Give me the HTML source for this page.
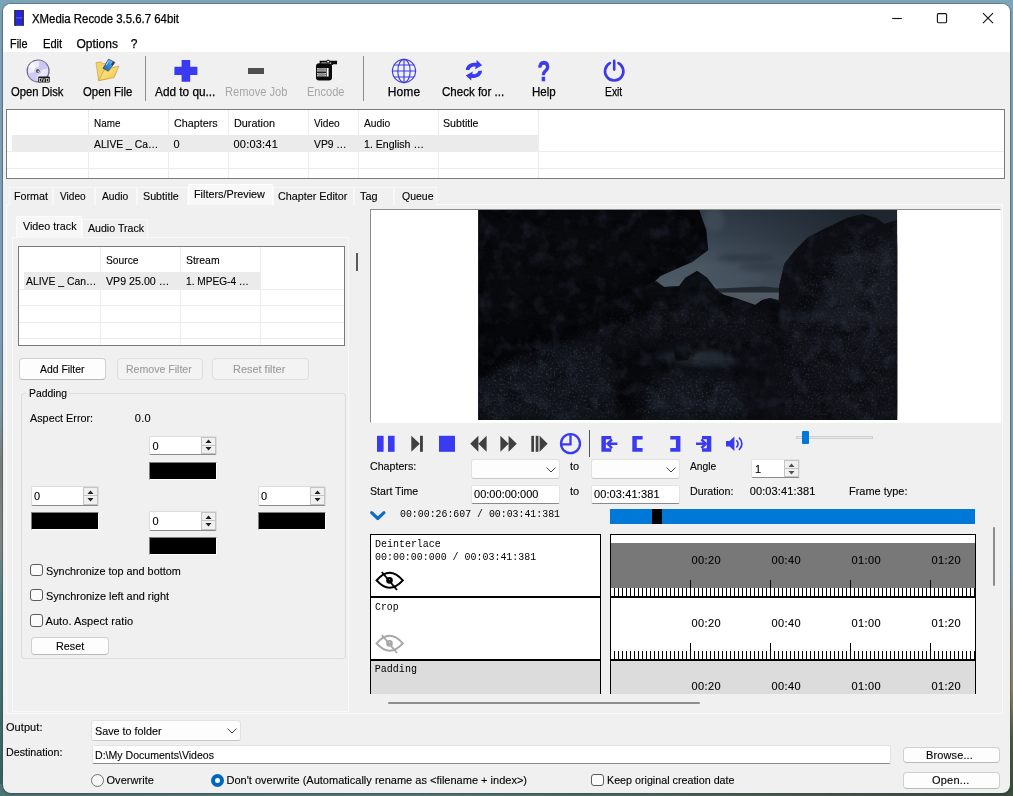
<!DOCTYPE html>
<html lang="en"><head><meta charset="utf-8"><title>XMedia Recode 3.5.6.7 64bit</title>
<style>
html,body{margin:0;padding:0;}
body{width:1013px;height:796px;overflow:hidden;position:relative;background:#6f8f9c;font-family:"Liberation Sans",sans-serif;}
#wall{position:absolute;left:0;top:0;width:1013px;height:796px;
 background:
  linear-gradient(to right,#4f7474,#587f7c 40%,#4a5e52 80%,#3d4d3c) 0 784px/1013px 12px no-repeat,
  linear-gradient(to bottom,#7ba3b7 0,#7ba1b5 340px,#8098a8 410px,#7c7e7a 465px,#848787 545px,#4c7f83 605px,#3d7171 700px,#356060 796px) 0 0/14px 796px no-repeat,
  linear-gradient(to bottom,#7da5b9 0,#7ba2b6 560px,#8a8f84 620px,#8c8268 690px,#4a5a42 740px,#3a4a36 796px) 999px 0/14px 796px no-repeat,
  #7da5b9;
}
#win{position:absolute;left:3px;top:4px;width:1007px;height:789px;border-radius:8px;overflow:hidden;background:#f0f0f0;box-shadow:0 0 0 1px rgba(70,85,90,.45),0 1px 3px rgba(0,0,0,.35);}
#stage{position:absolute;left:-3px;top:-4px;width:1013px;height:796px;will-change:transform;}
.b{position:absolute;box-sizing:border-box;}
.t{position:absolute;white-space:nowrap;color:#000;}
.ui{font-size:11px;-webkit-text-stroke:0.12px currentColor;}
.sg{font-size:12px;-webkit-text-stroke:0.25px currentColor;}
.mono{font-family:"Liberation Mono",monospace;font-size:10px;}
svg{position:absolute;overflow:visible;}

</style></head>
<body>
<div id="wall"></div>
<div id="win"><div id="stage">
<div class="b" style="left:0px;top:0px;width:1013px;height:52px;background:#ffffff;"></div>
<svg style="left:14px;top:10px" width="11" height="17" viewBox="0 0 11 17"><rect x="0.3" y="0" width="9.5" height="15.8" fill="#2a2a6a"/><rect x="1.8" y="0.8" width="6.5" height="14.4" fill="#2626e2"/><rect x="1.8" y="7" width="6.5" height="1.6" fill="#4a4af0"/><rect x="0.3" y="0" width="1.5" height="15.8" fill="#34343e"/><rect x="8.3" y="0" width="1.5" height="15.8" fill="#34343e"/></svg>
<div id="t1" class="t sg" style="left:32px;top:10.5px;line-height:16px;height:16px;transform:scaleX(0.9497);transform-origin:0 50%;">XMedia Recode 3.5.6.7 64bit</div>
<svg style="left:885px;top:8px" width="120" height="22" viewBox="0 0 120 22"><g stroke="#111" stroke-width="1.1" fill="none"><path d="M7.2 10.5H16.8"/><rect x="52.4" y="5.6" width="9.2" height="9.2" rx="1.2"/><path d="M98 5.2L108 15.2M108 5.2L98 15.2"/></g></svg>
<div id="t2" class="t sg" style="left:10.4px;top:36.0px;line-height:16px;height:16px;transform:scaleX(0.9047);transform-origin:0 50%;">File</div>
<div id="t3" class="t sg" style="left:42.5px;top:36.0px;line-height:16px;height:16px;transform:scaleX(0.9281);transform-origin:0 50%;">Edit</div>
<div id="t4" class="t sg" style="left:76.5px;top:36.0px;line-height:16px;height:16px;letter-spacing:0.02px;">Options</div>
<div id="t5" class="t sg" style="left:130.8px;top:36.0px;line-height:16px;height:16px;">?</div>
<div class="b" style="left:0px;top:52px;width:1013px;height:54px;background:#f0f0f0;"></div>
<div class="b" style="left:145px;top:56px;width:1px;height:45px;background:#8c8c8c;"></div>
<div class="b" style="left:363px;top:56px;width:1px;height:45px;background:#8c8c8c;"></div>
<div id="t6" class="t sg" style="left:10.7px;top:84.0px;line-height:16px;height:16px;transform:scaleX(0.937);transform-origin:0 50%;">Open Disk</div>
<div id="t7" class="t sg" style="left:83px;top:84.0px;line-height:16px;height:16px;transform:scaleX(0.9475);transform-origin:0 50%;">Open File</div>
<div id="t8" class="t sg" style="left:154.8px;top:84.0px;line-height:16px;height:16px;transform:scaleX(0.9839);transform-origin:0 50%;">Add to qu...</div>
<div id="t9" class="t sg" style="left:225px;top:84.0px;line-height:16px;height:16px;color:#a6a6a6;transform:scaleX(0.9262);transform-origin:0 50%;-webkit-text-stroke:0;">Remove Job</div>
<div id="t10" class="t sg" style="left:306.5px;top:84.0px;line-height:16px;height:16px;color:#a6a6a6;transform:scaleX(0.9213);transform-origin:0 50%;-webkit-text-stroke:0;">Encode</div>
<div id="t11" class="t sg" style="left:387.7px;top:84.0px;line-height:16px;height:16px;letter-spacing:0.146px;">Home</div>
<div id="t12" class="t sg" style="left:442.4px;top:84.0px;line-height:16px;height:16px;transform:scaleX(0.9615);transform-origin:0 50%;">Check for ...</div>
<div id="t13" class="t sg" style="left:531.8px;top:84.0px;line-height:16px;height:16px;transform:scaleX(0.96);transform-origin:0 50%;">Help</div>
<div id="t14" class="t sg" style="left:604.7px;top:84.0px;line-height:16px;height:16px;transform:scaleX(0.8593);transform-origin:0 50%;">Exit</div>
<svg style="left:26px;top:59px" width="26" height="25" viewBox="0 0 26 25">
<defs><radialGradient id="dg" cx="45%" cy="40%" r="70%"><stop offset="0" stop-color="#f6f5ff"/><stop offset="0.7" stop-color="#e6e3fa"/><stop offset="1" stop-color="#d2cef2"/></radialGradient>
<clipPath id="dcp"><circle cx="12.1" cy="11.9" r="10.6"/></clipPath></defs>
<circle cx="12.1" cy="11.9" r="10.9" fill="url(#dg)" stroke="#6c6a88" stroke-width="1.2"/>
<g clip-path="url(#dcp)"><path d="M12.1 11.9L14 -2L26 8Z" fill="#c6c1f4" opacity=".85"/><path d="M12.1 11.9L10 26L-2 16Z" fill="#c6c1f4" opacity=".75"/>
<path d="M12.1 11.9L-2 6L4 -2Z" fill="#ffffff" opacity=".7"/></g>
<circle cx="11.9" cy="11.9" r="3.3" fill="#e4e1f4" stroke="#b4b0d4" stroke-width="0.6"/>
<circle cx="11.8" cy="11.9" r="2" fill="#5a5868"/><circle cx="12.3" cy="12.5" r="0.7" fill="#d8d6e6"/>
<rect x="12.2" y="17.6" width="11.6" height="6" rx="0.8" fill="#181a18"/>
<text x="18" y="22.6" font-family="Liberation Sans, sans-serif" font-size="5" font-weight="bold" fill="#d8d8d8" text-anchor="middle">DVD</text>
</svg>
<svg style="left:95px;top:58px" width="26" height="25" viewBox="0 0 26 25">
<defs><linearGradient id="fg" x1="0" y1="0" x2="1" y2="1"><stop offset="0" stop-color="#fdeeb0"/><stop offset="0.6" stop-color="#f6d660"/><stop offset="1" stop-color="#e6b93c"/></linearGradient>
<linearGradient id="pg" x1="1" y1="0" x2="0" y2="1"><stop offset="0" stop-color="#a8dcfc"/><stop offset="0.45" stop-color="#3a92e4"/><stop offset="1" stop-color="#1c5cb0"/></linearGradient></defs>
<path d="M1 4.6L6 3.9L8 5.6L12.5 5L13 20.5L3.6 22.6Z" fill="#f3d46a" stroke="#c9a444" stroke-width=".7"/>
<path d="M13.6 1.2L19.8 4.4L13.6 13L8 10.4Z" fill="url(#pg)" stroke="#2c4660" stroke-width=".8"/>
<path d="M18 3.5L19.8 4.4L17.6 7.6L15.9 6.6Z" fill="#333a40"/>
<path d="M13.2 3.4L11 7.2" stroke="#d8efff" stroke-width="1" opacity=".8"/>
<path d="M3.6 22.6L9.2 11.8L13.4 13.6L16.4 10L23.8 8.2L19 19.6Z" fill="url(#fg)" stroke="#c49a38" stroke-width=".7"/>
</svg>
<svg style="left:174px;top:59.5px" width="24" height="22" viewBox="0 0 24 22"><path d="M7.6 0H16.2V6.8H23.4V15H16.2V21.8H7.6V15H0.4V6.8H7.6Z" fill="#3a3af2"/></svg>
<div class="b" style="left:247.8px;top:67.6px;width:16.3px;height:6.1px;background:#4f4f4f;"></div>
<svg style="left:315px;top:59px" width="23" height="23" viewBox="0 0 23 23">
<rect x="1" y="4.2" width="16" height="17.2" rx="3" fill="#0a0a0a"/>
<path d="M5.5 4.5V2.6H21.2V4.4H17V6" fill="none" stroke="#0a0a0a" stroke-width="1.7"/>
<circle cx="13.1" cy="2.7" r="1.5" fill="#e8e8e8" stroke="#0a0a0a" stroke-width="1"/>
<rect x="2.2" y="9" width="8.6" height="3.8" fill="#8f8f8f"/><rect x="2.2" y="13.8" width="8.6" height="3.8" fill="#8f8f8f"/>
<rect x="11.6" y="9" width="2" height="8.6" fill="#ffffff"/>
<g fill="#e0e0e0"><rect x="2.2" y="9.2" width="1" height="1"/><rect x="2.2" y="11.4" width="1" height="1"/><rect x="2.2" y="14" width="1" height="1"/><rect x="2.2" y="16.2" width="1" height="1"/><rect x="9.8" y="9.2" width="1" height="1"/><rect x="9.8" y="11.4" width="1" height="1"/><rect x="9.8" y="14" width="1" height="1"/><rect x="9.8" y="16.2" width="1" height="1"/></g>
</svg>
<svg style="left:391px;top:58px" width="26" height="26" viewBox="0 0 26 26"><g fill="none" stroke="#3d3de6" stroke-width="1.15">
<circle cx="13" cy="13" r="11.6"/><ellipse cx="13" cy="13" rx="6.2" ry="11.6"/><path d="M13 1.4V24.6M1.4 13H24.6M3.2 7H22.8M3.2 19H22.8"/></g></svg>
<svg style="left:464px;top:59px" width="20" height="23" viewBox="0 0 20 23"><g fill="#3a3af2">
<path id="ra" d="M1.8 10.9C2.2 6 7 2.9 12.4 4L12.7 1.1L18.1 6.2L11.1 10.3L11.6 7.6C8.6 7 6.2 8.2 5.4 10.9Z"/>
<path d="M1.8 10.9C2.2 6 7 2.9 12.4 4L12.7 1.1L18.1 6.2L11.1 10.3L11.6 7.6C8.6 7 6.2 8.2 5.4 10.9Z" transform="rotate(180 9.95 11.35)"/></g></svg>
<div id="t15" class="t sg" style="left:534.8px;top:55.599999999999994px;line-height:30px;height:30px;color:#3a3ae8;font-size:29px;font-weight:bold;transform:scaleX(0.72);transform-origin:50% 50%;-webkit-text-stroke:0.7px #3a3ae8;">?</div>
<svg style="left:602px;top:59px" width="25" height="24" viewBox="0 0 25 24"><g fill="none" stroke="#3a3ae8" stroke-width="2.6" stroke-linecap="round">
<path d="M7.9 4.2A9.2 9.2 0 1 0 16.5 4.2"/><path d="M12.2 1.8V10.6"/></g></svg>
<div class="b" style="left:6px;top:109px;width:999px;height:70px;background:#ffffff;border:1px solid #7a7a7a;"></div>
<div class="b" style="left:12px;top:135px;width:526px;height:16.5px;background:#ebebeb;"></div>
<div class="b" style="left:88px;top:110px;width:1px;height:68px;background:#ececec;"></div>
<div class="b" style="left:168px;top:110px;width:1px;height:68px;background:#ececec;"></div>
<div class="b" style="left:228px;top:110px;width:1px;height:68px;background:#ececec;"></div>
<div class="b" style="left:308px;top:110px;width:1px;height:68px;background:#ececec;"></div>
<div class="b" style="left:358px;top:110px;width:1px;height:68px;background:#ececec;"></div>
<div class="b" style="left:438px;top:110px;width:1px;height:68px;background:#ececec;"></div>
<div class="b" style="left:538px;top:110px;width:1px;height:68px;background:#ececec;"></div>
<div class="b" style="left:7px;top:151px;width:997px;height:1px;background:#ececec;"></div>
<div class="b" style="left:7px;top:168px;width:997px;height:1px;background:#ececec;"></div>
<div id="t16" class="t ui" style="left:93.8px;top:115.0px;line-height:16px;height:16px;transform:scaleX(0.8997);transform-origin:0 50%;">Name</div>
<div id="t17" class="t ui" style="left:173.5px;top:115.0px;line-height:16px;height:16px;transform:scaleX(0.9789);transform-origin:0 50%;">Chapters</div>
<div id="t18" class="t ui" style="left:233.5px;top:115.0px;line-height:16px;height:16px;transform:scaleX(0.9861);transform-origin:0 50%;">Duration</div>
<div id="t19" class="t ui" style="left:313.6px;top:115.0px;line-height:16px;height:16px;transform:scaleX(0.9199);transform-origin:0 50%;">Video</div>
<div id="t20" class="t ui" style="left:363.8px;top:115.0px;line-height:16px;height:16px;transform:scaleX(0.9346);transform-origin:0 50%;">Audio</div>
<div id="t21" class="t ui" style="left:443.4px;top:115.0px;line-height:16px;height:16px;transform:scaleX(0.9672);transform-origin:0 50%;">Subtitle</div>
<div id="t22" class="t ui" style="left:93.8px;top:136.0px;line-height:16px;height:16px;transform:scaleX(0.9374);transform-origin:0 50%;">ALIVE _ Ca…</div>
<div id="t23" class="t ui" style="left:173.5px;top:136.0px;line-height:16px;height:16px;">0</div>
<div id="t24" class="t ui" style="left:233.5px;top:136.0px;line-height:16px;height:16px;letter-spacing:0.209px;">00:03:41</div>
<div id="t25" class="t ui" style="left:313.6px;top:136.0px;line-height:16px;height:16px;transform:scaleX(0.9381);transform-origin:0 50%;">VP9 …</div>
<div id="t26" class="t ui" style="left:363.8px;top:136.0px;line-height:16px;height:16px;transform:scaleX(0.9619);transform-origin:0 50%;">1. English …</div>
<div class="b" style="left:6px;top:204px;width:997px;height:510px;background:#f0f0f0;border:1px solid #fafafa;"></div>
<div class="b" style="left:9px;top:187px;width:44px;height:18px;background:#f0f0f0;border:1px solid #f8f8f8;border-bottom:none;"></div>
<div id="t27" class="t ui" style="left:13.6px;top:188.0px;line-height:16px;height:16px;transform:scaleX(0.9758);transform-origin:0 50%;">Format</div>
<div class="b" style="left:53px;top:187px;width:41.5px;height:18px;background:#f0f0f0;border:1px solid #f8f8f8;border-bottom:none;"></div>
<div id="t28" class="t ui" style="left:59.5px;top:188.0px;line-height:16px;height:16px;transform:scaleX(0.9163);transform-origin:0 50%;">Video</div>
<div class="b" style="left:94.5px;top:187px;width:42.0px;height:18px;background:#f0f0f0;border:1px solid #f8f8f8;border-bottom:none;"></div>
<div id="t29" class="t ui" style="left:101.5px;top:188.0px;line-height:16px;height:16px;transform:scaleX(0.9346);transform-origin:0 50%;">Audio</div>
<div class="b" style="left:136.5px;top:187px;width:51.099999999999994px;height:18px;background:#f0f0f0;border:1px solid #f8f8f8;border-bottom:none;"></div>
<div id="t30" class="t ui" style="left:143.2px;top:188.0px;line-height:16px;height:16px;transform:scaleX(0.9754);transform-origin:0 50%;">Subtitle</div>
<div class="b" style="left:273px;top:187px;width:81px;height:18px;background:#f0f0f0;border:1px solid #f8f8f8;border-bottom:none;"></div>
<div id="t31" class="t ui" style="left:277.5px;top:188.0px;line-height:16px;height:16px;transform:scaleX(0.9783);transform-origin:0 50%;">Chapter Editor</div>
<div class="b" style="left:354px;top:187px;width:40px;height:18px;background:#f0f0f0;border:1px solid #f8f8f8;border-bottom:none;"></div>
<div id="t32" class="t ui" style="left:359.5px;top:188.0px;line-height:16px;height:16px;transform:scaleX(0.9859);transform-origin:0 50%;">Tag</div>
<div class="b" style="left:394px;top:187px;width:42.60000000000002px;height:18px;background:#f0f0f0;border:1px solid #f8f8f8;border-bottom:none;"></div>
<div id="t33" class="t ui" style="left:401.5px;top:188.0px;line-height:16px;height:16px;transform:scaleX(0.9536);transform-origin:0 50%;">Queue</div>
<div class="b" style="left:187.6px;top:184px;width:85.4px;height:21px;background:#f8f8f8;border:1px solid #ffffff;border-bottom:none;border-radius:2px 2px 0 0;"></div>
<div id="t34" class="t ui" style="left:194.3px;top:186.0px;line-height:16px;height:16px;transform:scaleX(0.983);transform-origin:0 50%;">Filters/Preview</div>
<div class="b" style="left:12px;top:237px;width:337px;height:475px;background:#f0f0f0;border:1px solid #f9f9f9;"></div>
<div class="b" style="left:16px;top:216px;width:66px;height:22px;background:#f7f7f7;border:1px solid #fcfcfc;border-bottom:none;border-radius:2px 2px 0 0;"></div>
<div id="t35" class="t ui" style="left:22.7px;top:218.0px;line-height:16px;height:16px;transform:scaleX(0.9758);transform-origin:0 50%;">Video track</div>
<div class="b" style="left:82px;top:219px;width:66px;height:18px;background:#f0f0f0;border:1px solid #f8f8f8;border-bottom:none;"></div>
<div id="t36" class="t ui" style="left:88px;top:219.6px;line-height:16px;height:16px;transform:scaleX(0.964);transform-origin:0 50%;">Audio Track</div>
<div class="b" style="left:18px;top:246px;width:327px;height:100px;background:#ffffff;border:1px solid #7a7a7a;"></div>
<div class="b" style="left:24px;top:272px;width:236px;height:16.5px;background:#ebebeb;"></div>
<div class="b" style="left:100px;top:247px;width:1px;height:98px;background:#ececec;"></div>
<div class="b" style="left:180px;top:247px;width:1px;height:98px;background:#ececec;"></div>
<div class="b" style="left:260px;top:247px;width:1px;height:98px;background:#ececec;"></div>
<div class="b" style="left:19px;top:288.5px;width:325px;height:1px;background:#ececec;"></div>
<div class="b" style="left:19px;top:305px;width:325px;height:1px;background:#ececec;"></div>
<div class="b" style="left:19px;top:322px;width:325px;height:1px;background:#ececec;"></div>
<div class="b" style="left:19px;top:338px;width:325px;height:1px;background:#ececec;"></div>
<div id="t37" class="t ui" style="left:105.6px;top:251.7px;line-height:16px;height:16px;transform:scaleX(0.9352);transform-origin:0 50%;">Source</div>
<div id="t38" class="t ui" style="left:185.5px;top:251.7px;line-height:16px;height:16px;transform:scaleX(0.9473);transform-origin:0 50%;">Stream</div>
<div id="t39" class="t ui" style="left:26px;top:273.0px;line-height:16px;height:16px;transform:scaleX(0.9424);transform-origin:0 50%;">ALIVE _ Can…</div>
<div id="t40" class="t ui" style="left:105.6px;top:273.0px;line-height:16px;height:16px;transform:scaleX(0.9689);transform-origin:0 50%;">VP9 25.00 …</div>
<div id="t41" class="t ui" style="left:186.3px;top:273.0px;line-height:16px;height:16px;transform:scaleX(0.9201);transform-origin:0 50%;">1. MPEG-4 …</div>
<div class="b" style="left:356px;top:253px;width:2px;height:18px;background:#5a5a5a;"></div>
<div class="b" style="left:19.3px;top:357.5px;width:87.2px;height:22px;background:#fdfdfd;border:1px solid #d0d0d0;border-radius:4px;border-bottom-color:#b9b9b9;"></div>
<div id="t42" class="t ui" style="left:40.2px;top:360.5px;line-height:16px;height:16px;transform:scaleX(0.9452);transform-origin:0 50%;">Add Filter</div>
<div class="b" style="left:116.6px;top:357.5px;width:86px;height:22px;background:#f3f3f3;border:1px solid #dedede;border-radius:4px;"></div>
<div id="t43" class="t ui" style="left:126px;top:360.5px;line-height:16px;height:16px;color:#9c9c9c;transform:scaleX(0.9596);transform-origin:0 50%;">Remove Filter</div>
<div class="b" style="left:211.6px;top:357.5px;width:97px;height:22px;background:#f3f3f3;border:1px solid #dedede;border-radius:4px;"></div>
<div id="t44" class="t ui" style="left:232.6px;top:360.5px;line-height:16px;height:16px;color:#9c9c9c;transform:scaleX(0.9947);transform-origin:0 50%;">Reset filter</div>
<div class="b" style="left:21px;top:393px;width:325px;height:266px;border:1px solid #dcdcdc;border-radius:3px;"></div>
<div class="b" style="left:26px;top:386px;width:43px;height:14px;background:#f0f0f0;"></div>
<div id="t45" class="t ui" style="left:28.5px;top:385.0px;line-height:16px;height:16px;transform:scaleX(0.9412);transform-origin:0 50%;">Padding</div>
<div id="t46" class="t ui" style="left:30.2px;top:410.2px;line-height:16px;height:16px;transform:scaleX(0.9831);transform-origin:0 50%;">Aspect Error:</div>
<div id="t47" class="t ui" style="left:134.8px;top:410.2px;line-height:16px;height:16px;letter-spacing:0.234px;">0.0</div>
<div class="b" style="left:149px;top:435.7px;width:68px;height:19.5px;background:#ffffff;border:1px solid #dcdcdc;border-radius:2px;border-bottom-color:#8a8a8a;"></div>
<div class="b" style="left:201px;top:436.7px;width:15px;height:17.5px;background:#f0f0f0;border:1px solid #c4c4c4;"></div>
<div class="b" style="left:202px;top:444.95px;width:13px;height:1px;background:#c4c4c4;"></div>
<svg style="left:205px;top:439.2px" width="7" height="12" viewBox="0 0 7 12"><path d="M3.5 0.5L6.5 4H0.5Z M3.5 11.5L6.5 8H0.5Z" fill="#202020"/></svg>
<div id="t48" class="t ui" style="left:152.5px;top:437.65px;line-height:16px;height:16px;">0</div>
<div class="b" style="left:149px;top:461.5px;width:68px;height:18px;background:#000000;border:1px solid #7e7e7e;border-right-color:#fff;border-bottom-color:#fff;"></div>
<div class="b" style="left:30.5px;top:486px;width:68px;height:19.5px;background:#ffffff;border:1px solid #dcdcdc;border-radius:2px;border-bottom-color:#8a8a8a;"></div>
<div class="b" style="left:82.5px;top:487px;width:15px;height:17.5px;background:#f0f0f0;border:1px solid #c4c4c4;"></div>
<div class="b" style="left:83.5px;top:495.25px;width:13px;height:1px;background:#c4c4c4;"></div>
<svg style="left:86.5px;top:489.5px" width="7" height="12" viewBox="0 0 7 12"><path d="M3.5 0.5L6.5 4H0.5Z M3.5 11.5L6.5 8H0.5Z" fill="#202020"/></svg>
<div id="t49" class="t ui" style="left:34.0px;top:487.95px;line-height:16px;height:16px;">0</div>
<div class="b" style="left:30.5px;top:512px;width:68px;height:18px;background:#000000;border:1px solid #7e7e7e;border-right-color:#fff;border-bottom-color:#fff;"></div>
<div class="b" style="left:257.5px;top:486px;width:68px;height:19.5px;background:#ffffff;border:1px solid #dcdcdc;border-radius:2px;border-bottom-color:#8a8a8a;"></div>
<div class="b" style="left:309.5px;top:487px;width:15px;height:17.5px;background:#f0f0f0;border:1px solid #c4c4c4;"></div>
<div class="b" style="left:310.5px;top:495.25px;width:13px;height:1px;background:#c4c4c4;"></div>
<svg style="left:313.5px;top:489.5px" width="7" height="12" viewBox="0 0 7 12"><path d="M3.5 0.5L6.5 4H0.5Z M3.5 11.5L6.5 8H0.5Z" fill="#202020"/></svg>
<div id="t50" class="t ui" style="left:261.0px;top:487.95px;line-height:16px;height:16px;">0</div>
<div class="b" style="left:257.5px;top:512px;width:68px;height:18px;background:#000000;border:1px solid #7e7e7e;border-right-color:#fff;border-bottom-color:#fff;"></div>
<div class="b" style="left:149px;top:511px;width:68px;height:19.5px;background:#ffffff;border:1px solid #dcdcdc;border-radius:2px;border-bottom-color:#8a8a8a;"></div>
<div class="b" style="left:201px;top:512px;width:15px;height:17.5px;background:#f0f0f0;border:1px solid #c4c4c4;"></div>
<div class="b" style="left:202px;top:520.25px;width:13px;height:1px;background:#c4c4c4;"></div>
<svg style="left:205px;top:514.5px" width="7" height="12" viewBox="0 0 7 12"><path d="M3.5 0.5L6.5 4H0.5Z M3.5 11.5L6.5 8H0.5Z" fill="#202020"/></svg>
<div id="t51" class="t ui" style="left:152.5px;top:512.95px;line-height:16px;height:16px;">0</div>
<div class="b" style="left:149px;top:537px;width:68px;height:18px;background:#000000;border:1px solid #7e7e7e;border-right-color:#fff;border-bottom-color:#fff;"></div>
<div class="b" style="left:30.2px;top:563.8px;width:12.6px;height:12.6px;background:#fbfbfb;border:1px solid #5c5c5c;border-radius:3px;"></div>
<div id="t52" class="t ui" style="left:45.5px;top:563.0px;line-height:16px;height:16px;transform:scaleX(0.9833);transform-origin:0 50%;">Synchronize top and bottom</div>
<div class="b" style="left:30.2px;top:588.8px;width:12.6px;height:12.6px;background:#fbfbfb;border:1px solid #5c5c5c;border-radius:3px;"></div>
<div id="t53" class="t ui" style="left:45.5px;top:588.0px;line-height:16px;height:16px;transform:scaleX(0.9908);transform-origin:0 50%;">Synchronize left and right</div>
<div class="b" style="left:30.2px;top:614.1999999999999px;width:12.6px;height:12.6px;background:#fbfbfb;border:1px solid #5c5c5c;border-radius:3px;"></div>
<div id="t54" class="t ui" style="left:45.5px;top:613.4px;line-height:16px;height:16px;letter-spacing:0.077px;">Auto. Aspect ratio</div>
<div class="b" style="left:31px;top:637px;width:78px;height:17.5px;background:#fdfdfd;border:1px solid #d0d0d0;border-radius:4px;border-bottom-color:#b9b9b9;"></div>
<div id="t55" class="t ui" style="left:55.5px;top:637.75px;line-height:16px;height:16px;transform:scaleX(0.9809);transform-origin:0 50%;">Reset</div>
<div class="b" style="left:370px;top:209px;width:631px;height:214px;background:#ffffff;border:1px solid #8c8c8c;border-right-color:#fdfdfd;border-bottom-color:#fdfdfd;"></div>
<svg style="left:478.3px;top:210.4px" width="419.4" height="210" viewBox="0 0 419 210">
<defs>
<linearGradient id="sky" gradientUnits="userSpaceOnUse" x1="0" y1="0" x2="0" y2="80"><stop offset="0" stop-color="#303b48"/><stop offset="0.35" stop-color="#3a4653"/><stop offset="0.7" stop-color="#4a5763"/><stop offset="1" stop-color="#4e5a65"/></linearGradient>
<linearGradient id="skyd" gradientUnits="userSpaceOnUse" x1="225" y1="0" x2="380" y2="0"><stop offset="0" stop-color="#0a0e14" stop-opacity="0"/><stop offset="0.45" stop-color="#0a0e14" stop-opacity=".22"/><stop offset="1" stop-color="#0a0e14" stop-opacity=".5"/></linearGradient>
<filter color-interpolation-filters="sRGB" id="b1" filterUnits="userSpaceOnUse" x="-40" y="-40" width="500" height="300"><feGaussianBlur stdDeviation="0.7"/></filter>
<filter color-interpolation-filters="sRGB" id="b3" filterUnits="userSpaceOnUse" x="-40" y="-40" width="500" height="300"><feGaussianBlur stdDeviation="2.5"/></filter>
<filter color-interpolation-filters="sRGB" id="b8" filterUnits="userSpaceOnUse" x="-40" y="-40" width="500" height="300"><feGaussianBlur stdDeviation="7"/></filter>
<filter color-interpolation-filters="sRGB" id="nz" filterUnits="userSpaceOnUse" x="0" y="0" width="419" height="210"><feTurbulence type="fractalNoise" baseFrequency="0.5" numOctaves="2" seed="7"/><feColorMatrix type="matrix" values="0 0 0 0 0.42  0 0 0 0 0.47  0 0 0 0 0.56  2.4 0 0 0 -1.25"/></filter>
<filter color-interpolation-filters="sRGB" id="nz2" filterUnits="userSpaceOnUse" x="0" y="0" width="419" height="210"><feTurbulence type="fractalNoise" baseFrequency="0.07" numOctaves="3" seed="3"/><feColorMatrix type="matrix" values="0 0 0 0 0.26  0 0 0 0 0.3  0 0 0 0 0.38  2.2 0 0 0 -1.05"/></filter>
<filter color-interpolation-filters="sRGB" id="nz3" filterUnits="userSpaceOnUse" x="0" y="0" width="419" height="210"><feTurbulence type="fractalNoise" baseFrequency="0.045 0.07" numOctaves="4" seed="11"/><feColorMatrix type="matrix" values="0 0 0 0 0.01  0 0 0 0 0.012  0 0 0 0 0.02  -3 0 0 0 1.5"/></filter>
<mask id="sm" maskUnits="userSpaceOnUse" x="0" y="0" width="419" height="210"><rect width="419" height="210" fill="#2a2a2a"/><g filter="url(#b8)" fill="#fff"><path d="M0 168L60 140L103 130L128 144L138 184V210H0Z"/><path d="M158 176L200 164L258 168L268 210H162Z"/><path d="M325 70L372 30L419 25V210H310L300 150Z" fill="#ccc"/><path d="M130 104L200 92L290 104L300 132L200 130L110 132Z" fill="#999"/></g></mask>
<clipPath id="vc"><rect width="419" height="210"/></clipPath>
<clipPath id="rocks"><path d="M0 0H221L228 20L230 40L214 52L200 58L182 66L176 72L186 77L201 76L207 68L219 61L229 68L238 80L246 85L257 88L277 95L284 90L292 88L301 90L301 76L306 54L317 40L330 27L352 16L369 8L384 4L398 8L406 14L419 10V210H0Z"/></clipPath>
</defs>
<g clip-path="url(#vc)">
<rect width="419" height="210" fill="#0d0f14"/>
<!-- sky -->
<rect x="170" y="0" width="249" height="100" fill="url(#sky)"/><rect x="170" y="0" width="249" height="81" fill="url(#skyd)"/>
<g filter="url(#b3)"><ellipse cx="268" cy="48" rx="30" ry="3.5" fill="#2b3541" opacity=".8"/><ellipse cx="285" cy="57" rx="24" ry="3" fill="#2d3743" opacity=".8"/><ellipse cx="245" cy="68" rx="40" ry="5" fill="#465260" opacity=".8"/><ellipse cx="290" cy="72" rx="22" ry="3" fill="#3e4a58" opacity=".7"/><ellipse cx="236" cy="10" rx="10" ry="12" fill="#44525e" opacity=".6"/></g>
<!-- sea + distant hills -->
<rect x="170" y="81" width="140" height="22" fill="#525a63"/>
<path d="M180 82L230 79L262 77.5L285 76.5L302 78V82.5H180Z" fill="#222930" filter="url(#b1)"/>
<g filter="url(#b1)">
<!-- right rock mass -->
<path d="M301 210L300 102L301 76L306 54L317 40L330 27L352 16L369 8L384 4L398 8L406 14L419 10V210Z" fill="#14171e"/>
<!-- left overhang -->
<path d="M0 0H221L228 20L230 40L214 52L200 58L182 66L176 72L150 84L110 100L70 118L30 138L0 150Z" fill="#0a0b10"/>
<!-- mid rocks -->
<path d="M100 110L150 84L178 71L186 77L201 76L207 68L219 61L229 68L238 80L246 85L257 88L277 95L284 90L292 88L302 91V210H0V150Z" fill="#0f1218"/>
<path d="M201 79L207 68L219 61L229 68L238 80L240 96L215 100L200 92Z" fill="#14181f"/>
</g>
<!-- brightness variation -->
<g filter="url(#b8)">
<path d="M338 62L372 38L419 30V140L372 150L335 128Z" fill="#262b35" opacity=".95"/>
<path d="M318 95L350 120L419 125V210H300L296 150Z" fill="#1b1f27" opacity=".95"/>
<path d="M0 168L60 140L103 130L128 144L138 184V210H0Z" fill="#1e232b" opacity=".95"/>
<path d="M158 176L200 164L258 168L268 210H162Z" fill="#20262e" opacity=".95"/>
<path d="M130 104L200 92L290 104L300 132L200 130L110 132Z" fill="#181c23" opacity=".9"/>
<path d="M262 150L300 140L335 160L330 210H268Z" fill="#161a21" opacity=".9"/>
<path d="M10 10L200 6L215 30L180 55L60 100L10 110Z" fill="#0e1016" opacity=".9"/>
</g>
<g filter="url(#b3)">
<path d="M175 146L196 141L216 139L240 141L264 152L244 157L222 157L196 154Z" fill="#2e3640"/>
<path d="M214 141L240 141L250 148L236 155L218 154Z" fill="#3a4450"/>
<path d="M96 116L140 96L170 84L176 100L130 122Z" fill="#08090d" opacity=".8"/>
<path d="M138 150L160 140L175 160L165 205L140 205Z" fill="#0b0d12" opacity=".8"/>
<path d="M330 60L345 40L360 50L340 90L325 100Z" fill="#101319" opacity=".7"/>
<path d="M0 150L50 128L100 112L104 126L50 142L0 168Z" fill="#050609" opacity=".85"/>
</g>
<path d="M195 140L206 137L213 143L210 150L198 151Z" fill="#12161c" filter="url(#b1)"/>
<!-- texture -->
<g clip-path="url(#rocks)"><rect width="419" height="210" fill="#020306" opacity=".4"/><rect width="419" height="210" filter="url(#nz3)" opacity=".45"/><rect width="419" height="210" filter="url(#nz2)" opacity=".3"/><g mask="url(#sm)"><rect width="419" height="210" filter="url(#nz)" opacity=".42"/></g></g>
</g></svg>
<svg style="left:370px;top:428px" width="520" height="32" viewBox="0 0 520 32">
<g fill="#3a3af2"><rect x="7" y="7.8" width="6.6" height="16"/><rect x="18" y="7.8" width="6.6" height="16"/><rect x="69" y="7.8" width="16" height="16"/></g>
<g fill="#404040"><path d="M41.3 7.8L49.8 15.8L41.3 23.8Z"/><rect x="50" y="7.8" width="2.9" height="16"/>
<path d="M108.4 7.8V23.8L100.2 15.8Z M116.6 7.8V23.8L108.4 15.8Z"/>
<path d="M130.4 7.8V23.8L138.6 15.8Z M138.6 7.8V23.8L146.8 15.8Z"/>
<rect x="161.3" y="7.8" width="2.7" height="16"/><rect x="165.7" y="7.8" width="2.7" height="16"/><path d="M169.6 7.8L177.6 15.8L169.6 23.8Z"/></g>
<g fill="none" stroke="#3a3af2" stroke-width="2.3"><circle cx="200.5" cy="15.6" r="9.5"/><path d="M200.5 6.3V16.4H191"/></g>
<rect x="219" y="2" width="1" height="27" fill="#555"/>
<g fill="#3a3af2">
<path d="M231.4 7.9H241.3V11.3H235.9V20.3H241.3V23.7H231.4Z"/>
<path d="M262.3 7.9H272.6V11.5H266.8V20.1H272.6V23.7H262.3Z"/>
<path d="M310.4 7.9H300.3V11.5H305.9V20.1H300.3V23.7H310.4Z"/>
<path d="M341.3 7.9H332V11.3H336.8V20.3H332V23.7H341.3Z"/>
<path d="M356 13H359.6L364.4 8.6V23L359.6 18.6H356Z"/></g>
<g fill="none" stroke="#3a3af2" stroke-width="2.5"><path d="M247.4 15.8H238M242 11.4L237.6 15.8L242 20.2"/><path d="M326 15.8H335.4M331.4 11.4L335.8 15.8L331.4 20.2"/></g>
<g fill="none" stroke="#3a3af2" stroke-width="1.7" stroke-linecap="round"><path d="M366.8 12.8A4.2 4.2 0 0 1 366.8 18.8"/><path d="M369.4 10.2A7.6 7.6 0 0 1 369.4 21.4"/></g>
</svg>
<div class="b" style="left:796px;top:436px;width:77px;height:3.4px;background:#e7e7e7;border:1px solid #d0d0d0;"></div>
<div class="b" style="left:801.5px;top:431px;width:7px;height:13px;background:#0078d7;border-radius:1px;"></div>
<div id="t56" class="t ui" style="left:369.8px;top:458.4px;line-height:16px;height:16px;transform:scaleX(0.9685);transform-origin:0 50%;">Chapters:</div>
<div class="b" style="left:470.5px;top:459px;width:89px;height:20px;background:#fdfdfd;border:1px solid #e2e2e2;border-radius:3px;border-bottom-color:#c8c8c8;"></div>
<svg style="left:545.5px;top:466.5px" width="10" height="6" viewBox="0 0 10 6"><path d="M0.5 0.5L5 5L9.5 0.5" fill="none" stroke="#444" stroke-width="1"/></svg>
<div id="t57" class="t ui" style="left:570px;top:458.4px;line-height:16px;height:16px;">to</div>
<div class="b" style="left:590.5px;top:459px;width:89px;height:20px;background:#fdfdfd;border:1px solid #e2e2e2;border-radius:3px;border-bottom-color:#c8c8c8;"></div>
<svg style="left:665.5px;top:466.5px" width="10" height="6" viewBox="0 0 10 6"><path d="M0.5 0.5L5 5L9.5 0.5" fill="none" stroke="#444" stroke-width="1"/></svg>
<div id="t58" class="t ui" style="left:689.9px;top:458.0px;line-height:16px;height:16px;transform:scaleX(0.9346);transform-origin:0 50%;">Angle</div>
<div class="b" style="left:750.5px;top:459px;width:49px;height:19px;background:#ffffff;border:1px solid #e3e3e3;border-radius:2px;border-bottom-color:#8a8a8a;"></div>
<div class="b" style="left:783.5px;top:460px;width:15px;height:17px;background:#f0f0f0;border:1px solid #c4c4c4;"></div>
<div class="b" style="left:784.5px;top:468px;width:13px;height:1px;background:#c4c4c4;"></div>
<svg style="left:787.5px;top:462.5px" width="7" height="12" viewBox="0 0 7 12"><path d="M3.5 0.5L6.5 4H0.5Z M3.5 11.5L6.5 8H0.5Z" fill="#505050"/></svg>
<div id="t59" class="t ui" style="left:755px;top:460.7px;line-height:16px;height:16px;">1</div>
<div id="t60" class="t ui" style="left:369.8px;top:483.0px;line-height:16px;height:16px;transform:scaleX(0.9616);transform-origin:0 50%;">Start Time</div>
<div class="b" style="left:470.5px;top:484.5px;width:89px;height:19px;background:#ffffff;border:1px solid #e3e3e3;border-radius:2px;border-bottom-color:#8a8a8a;"></div>
<div id="t61" class="t ui" style="left:474px;top:486.0px;line-height:16px;height:16px;letter-spacing:0.022px;">00:00:00:000</div>
<div id="t62" class="t ui" style="left:570px;top:483.0px;line-height:16px;height:16px;">to</div>
<div class="b" style="left:590.5px;top:484.5px;width:89px;height:19px;background:#ffffff;border:1px solid #e3e3e3;border-radius:2px;border-bottom-color:#8a8a8a;"></div>
<div id="t63" class="t ui" style="left:593.9px;top:486.0px;line-height:16px;height:16px;letter-spacing:0.13px;">00:03:41:381</div>
<div id="t64" class="t ui" style="left:689.9px;top:483.4px;line-height:16px;height:16px;transform:scaleX(0.9722);transform-origin:0 50%;">Duration:</div>
<div id="t65" class="t ui" style="left:749.7px;top:483.4px;line-height:16px;height:16px;letter-spacing:0.122px;">00:03:41:381</div>
<div id="t66" class="t ui" style="left:849.3px;top:483.4px;line-height:16px;height:16px;transform:scaleX(0.9968);transform-origin:0 50%;">Frame type:</div>
<svg style="left:369px;top:510px" width="17" height="12" viewBox="0 0 17 12"><path d="M2.6 2.7L8.8 8.5L15 2.7" fill="none" stroke="#0f6cbd" stroke-width="3.1" stroke-linecap="round" stroke-linejoin="round"/></svg>
<div id="t67" class="t mono" style="left:399.7px;top:506.5px;line-height:16px;height:16px;transform:scaleX(0.9875);transform-origin:0 50%;">00:00:26:607 / 00:03:41:381</div>
<div class="b" style="left:610px;top:509px;width:365px;height:14.5px;background:#0078d7;"></div>
<div class="b" style="left:652px;top:509px;width:10px;height:14.5px;background:#000000;"></div>
<div class="b" style="left:370px;top:534px;width:231px;height:160px;background:#ffffff;border:1px solid #000;border-bottom:none;border-width:1.5px 1.5px 0 1.5px;"></div>
<div class="b" style="left:371px;top:661px;width:229px;height:33px;background:#dcdcdc;"></div>
<div class="b" style="left:370px;top:596px;width:231px;height:2px;background:#000;"></div>
<div class="b" style="left:370px;top:659px;width:231px;height:2px;background:#000;"></div>
<div id="t68" class="t mono" style="left:374.7px;top:536.5px;line-height:16px;height:16px;transform:scaleX(0.9967);transform-origin:0 50%;">Deinterlace</div>
<div id="t69" class="t mono" style="left:374.7px;top:550.3px;line-height:16px;height:16px;transform:scaleX(0.9949);transform-origin:0 50%;">00:00:00:000 / 00:03:41:381</div>
<div id="t70" class="t mono" style="left:374.7px;top:600.2px;line-height:16px;height:16px;transform:scaleX(0.9869);transform-origin:0 50%;">Crop</div>
<div id="t71" class="t mono" style="left:374.7px;top:662.4px;line-height:16px;height:16px;letter-spacing:0.041px;">Padding</div>
<svg style="left:375px;top:570.5px" width="30" height="20" viewBox="0 0 30 20"><path d="M1.6 9.4Q14.6 -6 27.8 9.4Q14.6 24 1.6 9.4Z" fill="none" stroke="#000000" stroke-width="2.1" stroke-linejoin="miter"/><circle cx="14.5" cy="9.4" r="3.3" fill="#000000"/><circle cx="14.3" cy="8.7" r="0.8" fill="#fff" opacity=".8"/>
<path d="M6.8 1L22 19" stroke="#000000" stroke-width="1.9"/></svg>
<svg style="left:375px;top:633.5px" width="30" height="20" viewBox="0 0 30 20"><path d="M1.6 9.4Q14.6 -6 27.8 9.4Q14.6 24 1.6 9.4Z" fill="none" stroke="#a8a8a8" stroke-width="2.1" stroke-linejoin="miter"/><circle cx="14.5" cy="9.4" r="3.3" fill="#a8a8a8"/><circle cx="14.3" cy="8.7" r="0.8" fill="#fff" opacity=".8"/>
<path d="M6.8 1L22 19" stroke="#a8a8a8" stroke-width="1.9"/></svg>
<div class="b" style="left:610px;top:534px;width:366px;height:160px;background:#ffffff;border:1px solid #000;border-bottom:none;border-width:1.5px 1.5px 0 1.5px;"></div>
<div class="b" style="left:611px;top:543px;width:364px;height:44.5px;background:#787878;"></div>
<div class="b" style="left:611px;top:661px;width:364px;height:33px;background:#dcdcdc;"></div>
<div class="b" style="left:610px;top:587.5px;width:365px;height:9px;background:#ffffff;background-image:repeating-linear-gradient(to right,#000 0px,#000 1px,rgba(0,0,0,0) 1px,rgba(0,0,0,0) 4px);"></div>
<div class="b" style="left:610px;top:650.5px;width:365px;height:9px;background:#ffffff;background-image:repeating-linear-gradient(to right,#000 0px,#000 1px,rgba(0,0,0,0) 1px,rgba(0,0,0,0) 4px);"></div>
<div class="b" style="left:610px;top:596px;width:366px;height:2px;background:#000;"></div>
<div class="b" style="left:610px;top:659px;width:366px;height:2px;background:#000;"></div>
<div class="b" style="left:690px;top:580px;width:1px;height:8px;background:#000;"></div>
<div id="t72" class="t ui" style="left:691.6px;top:552.3px;line-height:16px;height:16px;letter-spacing:0.394px;">00:20</div>
<div class="b" style="left:690px;top:643px;width:1px;height:8px;background:#000;"></div>
<div id="t73" class="t ui" style="left:691.6px;top:615.3px;line-height:16px;height:16px;letter-spacing:0.394px;">00:20</div>
<div id="t74" class="t ui" style="left:691.6px;top:678.3px;line-height:16px;height:16px;letter-spacing:0.394px;">00:20</div>
<div class="b" style="left:770px;top:580px;width:1px;height:8px;background:#000;"></div>
<div id="t75" class="t ui" style="left:771.6px;top:552.3px;line-height:16px;height:16px;letter-spacing:0.394px;">00:40</div>
<div class="b" style="left:770px;top:643px;width:1px;height:8px;background:#000;"></div>
<div id="t76" class="t ui" style="left:771.6px;top:615.3px;line-height:16px;height:16px;letter-spacing:0.394px;">00:40</div>
<div id="t77" class="t ui" style="left:771.6px;top:678.3px;line-height:16px;height:16px;letter-spacing:0.394px;">00:40</div>
<div class="b" style="left:850px;top:580px;width:1px;height:8px;background:#000;"></div>
<div id="t78" class="t ui" style="left:851.6px;top:552.3px;line-height:16px;height:16px;letter-spacing:0.394px;">01:00</div>
<div class="b" style="left:850px;top:643px;width:1px;height:8px;background:#000;"></div>
<div id="t79" class="t ui" style="left:851.6px;top:615.3px;line-height:16px;height:16px;letter-spacing:0.394px;">01:00</div>
<div id="t80" class="t ui" style="left:851.6px;top:678.3px;line-height:16px;height:16px;letter-spacing:0.394px;">01:00</div>
<div class="b" style="left:930px;top:580px;width:1px;height:8px;background:#000;"></div>
<div id="t81" class="t ui" style="left:931.6px;top:552.3px;line-height:16px;height:16px;letter-spacing:0.394px;">01:20</div>
<div class="b" style="left:930px;top:643px;width:1px;height:8px;background:#000;"></div>
<div id="t82" class="t ui" style="left:931.6px;top:615.3px;line-height:16px;height:16px;letter-spacing:0.394px;">01:20</div>
<div id="t83" class="t ui" style="left:931.6px;top:678.3px;line-height:16px;height:16px;letter-spacing:0.394px;">01:20</div>
<div class="b" style="left:387.5px;top:701.5px;width:312.5px;height:2px;background:#8c8c8c;border-radius:1px;"></div>
<div class="b" style="left:993px;top:527px;width:2px;height:59px;background:#8c8c8c;border-radius:1px;"></div>
<div id="t84" class="t ui" style="left:6px;top:718.6px;line-height:16px;height:16px;letter-spacing:0.06px;">Output:</div>
<div class="b" style="left:91px;top:720px;width:149.5px;height:21px;background:#fdfdfd;border:1px solid #e2e2e2;border-radius:3px;border-bottom-color:#c8c8c8;"></div>
<svg style="left:226.5px;top:728.0px" width="10" height="6" viewBox="0 0 10 6"><path d="M0.5 0.5L5 5L9.5 0.5" fill="none" stroke="#444" stroke-width="1"/></svg>
<div id="t85" class="t ui" style="left:95px;top:723.0px;line-height:16px;height:16px;transform:scaleX(0.9797);transform-origin:0 50%;">Save to folder</div>
<div id="t86" class="t ui" style="left:6px;top:743.5px;line-height:16px;height:16px;transform:scaleX(0.9726);transform-origin:0 50%;">Destination:</div>
<div class="b" style="left:91.5px;top:745px;width:799px;height:19px;background:#ffffff;border:1px solid #e3e3e3;border-radius:2px;border-bottom-color:#8a8a8a;"></div>
<div id="t87" class="t ui" style="left:95px;top:747.0px;line-height:16px;height:16px;transform:scaleX(0.9604);transform-origin:0 50%;">D:\My Documents\Videos</div>
<div class="b" style="left:903px;top:746.5px;width:96.5px;height:16.5px;background:#fdfdfd;border:1px solid #d0d0d0;border-radius:4px;border-bottom-color:#b9b9b9;"></div>
<div id="t88" class="t ui" style="left:926px;top:747.0px;line-height:16px;height:16px;letter-spacing:0.127px;">Browse...</div>
<div class="b" style="left:903px;top:771.5px;width:96.5px;height:17px;background:#fdfdfd;border:1px solid #d0d0d0;border-radius:4px;border-bottom-color:#b9b9b9;"></div>
<div id="t89" class="t ui" style="left:932px;top:772.0px;line-height:16px;height:16px;letter-spacing:0.203px;">Open...</div>
<div class="b" style="left:91px;top:773.5px;width:13px;height:13px;background:#f7f7f7;border:1px solid #707070;border-radius:7px;"></div>
<div id="t90" class="t ui" style="left:106.5px;top:772.0px;line-height:16px;height:16px;letter-spacing:0.049px;">Overwrite</div>
<div class="b" style="left:211px;top:773.5px;width:13px;height:13px;background:#ffffff;border:4px solid #0067c0;border-radius:7px;"></div>
<div id="t91" class="t ui" style="left:226.5px;top:772.0px;line-height:16px;height:16px;letter-spacing:0.006px;">Don't overwrite (Automatically rename as &lt;filename + index&gt;)</div>
<div class="b" style="left:591.2px;top:773.8px;width:12.6px;height:12.6px;background:#fbfbfb;border:1px solid #5c5c5c;border-radius:3px;"></div>
<div id="t92" class="t ui" style="left:607px;top:772.0px;line-height:16px;height:16px;transform:scaleX(0.9742);transform-origin:0 50%;">Keep original creation date</div>
</div></div>
</body></html>
